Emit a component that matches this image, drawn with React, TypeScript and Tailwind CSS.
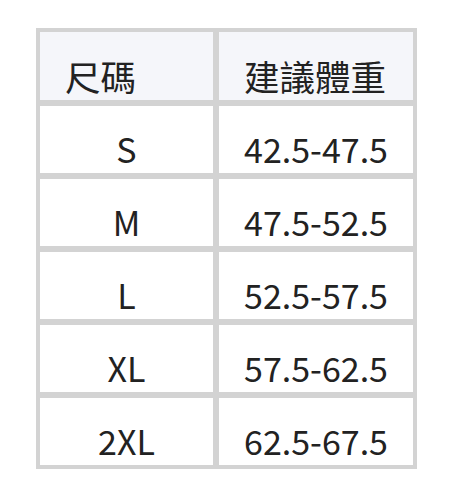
const rows = [
  { size: "S", weight: "42.5-47.5" },
  { size: "M", weight: "47.5-52.5" },
  { size: "L", weight: "52.5-57.5" },
  { size: "XL", weight: "57.5-62.5" },
  { size: "2XL", weight: "62.5-67.5" },
];

export default function App() {
  return (
    <div
      className="min-h-screen bg-white pt-7 pl-9"
      style={{ fontFamily: '"Noto Sans CJK TC", "Noto Sans", sans-serif' }}
    >
      <div className="grid w-[381px] grid-cols-[173px_194px] gap-1.5 bg-[#d3d3d3] p-1 text-[34px] text-[#222]">
        <div className="flex h-[68px] items-center bg-[#f5f6fa] pt-5 pl-[25px] text-[35.5px]">尺碼</div>
        <div className="flex h-[68px] items-center bg-[#f5f6fa] pt-5 pl-[25px] text-[35.5px]">建議體重</div>
        {rows.map((row) => (
          <div key={row.size} className="contents">
            <div className="flex h-[67px] items-center justify-center bg-white pt-[18px]">
              {row.size}
            </div>
            <div className="flex h-[67px] items-center justify-center bg-white pt-[18px]">
              {row.weight}
            </div>
          </div>
        ))}
      </div>
    </div>
  );
}
